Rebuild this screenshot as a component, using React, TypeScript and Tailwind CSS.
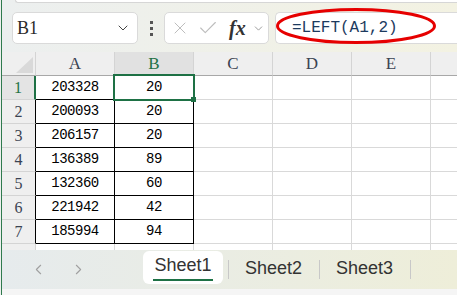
import { ChevronDown, ChevronLeft, ChevronRight, X, Check } from "lucide-react";

const rows = [
  ["203328", "20"],
  ["200093", "20"],
  ["206157", "20"],
  ["136389", "89"],
  ["132360", "60"],
  ["221942", "42"],
  ["185994", "94"],
];
const cols = ["A", "B", "C", "D", "E", ""];

function HeaderRow() {
  return (
    <div className="flex h-[24px]">
      <div className="relative w-[34px] shrink-0 border-b border-r border-b-[#a8a8a8] border-r-[#d4d4d4] bg-[#efefef]">
        <svg className="absolute bottom-[2px] right-[2px]" width="17" height="16" viewBox="0 0 17 16">
          <polygon points="17,0 17,16 0,16" fill="#d9d9d9" />
        </svg>
      </div>
      {cols.map((c) => (
        <div
          key={c || "x"}
          className={`flex w-[79px] shrink-0 items-center justify-center border-b border-r border-b-[#a8a8a8] border-r-[#d4d4d4] font-['Liberation_Serif',serif] text-[17px] ${
            c === "B" ? "bg-[#e1e1e1] text-[#1e7145]" : "bg-[#efefef] text-[#3b4352]"
          }`}
        >
          {c}
        </div>
      ))}
    </div>
  );
}

function DataRow({ n, values, label = true }: { n: number; values?: string[]; label?: boolean }) {
  const active = n === 1;
  const inData = values !== undefined;
  return (
    <div className="flex h-[24px]">
      <div
        className={`flex w-[34px] shrink-0 items-center justify-center border-b border-b-[#d4d4d4] font-['Liberation_Serif',serif] text-[16px] ${
          active
            ? "border-r-2 border-r-[#1e7145] bg-[#e4e4e4] text-[#1e7145]"
            : inData
              ? "border-r border-r-black bg-[#efefef] text-[#3b4352]"
              : "border-r border-r-[#d4d4d4] bg-[#efefef] text-[#3b4352]"
        }`}
      >
        {label ? n : ""}
      </div>
      {cols.map((c, i) => {
        const v = values && i < 2 ? values[i] : "";
        const black = values && i < 2;
        return (
          <div
            key={c || "x"}
            className={`flex w-[79px] shrink-0 items-center justify-center border-b border-r bg-white font-['Liberation_Mono',monospace] text-[14px] tracking-[-0.5px] text-black ${
              black ? "border-black" : "border-[#d9d9d9]"
            }`}
          >
            {v}
          </div>
        );
      })}
    </div>
  );
}

export default function App() {
  return (
    <div className="flex h-[295px] w-[457px] overflow-hidden bg-white font-['Liberation_Sans',sans-serif]">
      <div className="w-px shrink-0 bg-[#eef0ef]" />
      <div className="w-px shrink-0 bg-[#2f7a4e]" />

      <div className="flex min-w-0 flex-1 flex-col">
        {/* toolbar */}
        <div className="relative h-[52px] shrink-0 bg-gradient-to-r from-[#ecefef] to-[#f3f2e2]">
          <div className="ml-[13px] h-[3px] rounded-bl-[5px] border-b border-l border-[#d6d6d6] bg-white" />
          <div className="mt-[9px] flex h-[32px] items-center">
            <div className="ml-[10px] flex h-[32px] w-[126px] items-center justify-between rounded-[5px] border border-[#dadada] bg-white pl-[4px] pr-[6px]">
              <span className="font-['Liberation_Serif',serif] text-[18px] text-[#2a2a2a]">B1</span>
              <ChevronDown size={16} strokeWidth={1.5} className="text-[#444]" />
            </div>
            <div className="ml-[12px] flex w-[3px] flex-col gap-[3px]">
              <div className="h-[3px] w-[3px] bg-[#555]" />
              <div className="h-[3px] w-[3px] bg-[#555]" />
              <div className="h-[3px] w-[3px] bg-[#555]" />
            </div>
            <div className="ml-[11px] flex h-[32px] w-[105px] items-center rounded-[5px] border border-[#dadada] bg-white pl-[5px]">
              <X size={20} strokeWidth={1.2} className="text-[#bdbdbd]" />
              <Check size={22} strokeWidth={1.2} className="ml-[7px] text-[#bdbdbd]" />
              <span className="ml-[10px] font-['Liberation_Serif',serif] text-[20px] font-bold italic leading-none text-[#333]">
                fx
              </span>
              <ChevronDown size={13} strokeWidth={1.5} className="ml-[6px] text-[#888]" />
            </div>
            <div className="relative ml-[6px] flex h-[32px] flex-1 items-center rounded-l-[5px] border border-r-0 border-[#dadada] bg-white pl-[16px]">
              <span className="font-['Liberation_Mono',monospace] text-[16px] text-[#1c3a5e]">=LEFT(A1,2)</span>
              <svg className="absolute left-[0px] top-[-6px]" width="162" height="38" viewBox="0 0 162 38">
                <ellipse cx="80" cy="19" rx="78.5" ry="16.5" fill="none" stroke="#e60000" strokeWidth="3" />
              </svg>
            </div>
          </div>
        </div>

        {/* grid */}
        <div className="relative h-[198px] shrink-0 overflow-hidden">
          <HeaderRow />
          {rows.map((r, i) => (
            <DataRow key={i} n={i + 1} values={r} />
          ))}
          <DataRow n={8} label={false} />
          <div className="absolute left-[111px] top-[22px] h-[27px] w-[82px] border-2 border-[#1e7145]" />
          <div className="absolute left-[189px] top-[45px] h-[5px] w-[5px] bg-[#1e7145]" />
        </div>

        {/* sheet tabs */}
        <div className="flex h-[39px] shrink-0 items-center bg-gradient-to-r from-[#e6ebed] to-[#eeeed9]">
          <ChevronLeft size={17} strokeWidth={1.5} className="ml-[28px] text-[#a0a0a0]" />
          <ChevronRight size={17} strokeWidth={1.5} className="ml-[23px] text-[#a0a0a0]" />
          <div className="relative ml-[56px] mt-[-4px] flex h-[33px] w-[80px] items-center justify-center rounded-[6px] bg-white">
            <span className="mt-[-4px] text-[18px] text-[#333]">Sheet1</span>
            <div className="absolute bottom-[3px] left-[10px] h-[2px] w-[60px] bg-[#1e7145]" />
          </div>
          <div className="ml-[5px] h-[19px] w-px bg-[#c8c8c8]" />
          <span className="ml-[16px] mt-[-3px] w-[57px] text-[18px] text-[#333]">Sheet2</span>
          <div className="ml-[17px] h-[19px] w-px bg-[#c8c8c8]" />
          <span className="ml-[16px] mt-[-3px] w-[57px] text-[18px] text-[#333]">Sheet3</span>
          <div className="ml-[17px] h-[19px] w-px bg-[#c8c8c8]" />
        </div>
        <div className="flex-1 bg-[#f5f5f5]" />
      </div>
    </div>
  );
}
